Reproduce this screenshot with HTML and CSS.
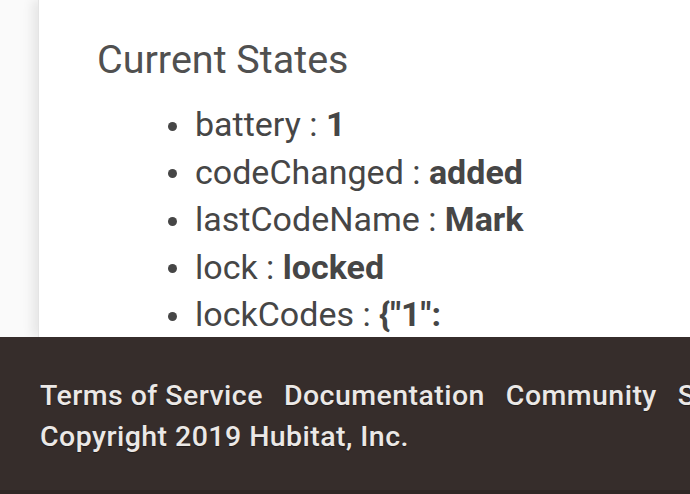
FILE: index.html
```html
<!DOCTYPE html>
<html>
<head>
<meta charset="utf-8">
<link rel="stylesheet" href="styles.css">
</head>
<body>
<div class="page">
  <main class="panel">
    <h2 class="title">Current States</h2>
    <ul class="states">
      <li>battery : <b>1</b></li>
      <li>codeChanged : <b>added</b></li>
      <li>lastCodeName : <b>Mark</b></li>
      <li>lock : <b>locked</b></li>
      <li>lockCodes : <b>{"1":</b></li>
    </ul>
  </main>
</div>
<footer class="footer">
  <nav class="links">
    <span>Terms of Service</span>
    <span>Documentation</span>
    <span>Community</span>
    <span>Support</span>
  </nav>
  <div class="copy">Copyright 2019 Hubitat, Inc.</div>
</footer>
</body>
</html>
```

FILE: styles.css
```css
html, body {
  margin: 0;
  padding: 0;
  width: 690px;
  height: 494px;
  overflow: hidden;
  background: #fafafa;
  font-family: Roboto, "Liberation Sans", sans-serif;
}
.page {
  height: 337px;
  padding-left: 38px;
  overflow: hidden;
}
.panel {
  background: #fff;
  height: 337px;
  box-shadow: -6px 0 10px rgba(0,0,0,0.08);
  border-left: 1px solid #e4e4e4;
  padding: 37px 0 0 58px;
  box-sizing: border-box;
  width: 700px;
}
.title {
  margin: 0;
  font-weight: 400;
  font-size: 39.5px;
  line-height: 46px;
  color: #505050;
}
.states {
  margin: 18px 0 0;
  padding-left: 98px;
  list-style: none;
  font-size: 34px;
  line-height: 47.5px;
  color: #464646;
}
.states li::before {
  content: "";
  display: inline-block;
  width: 9px;
  height: 9px;
  border-radius: 50%;
  background: #464646;
  vertical-align: middle;
  margin: -2px 18px 0 -27px;
}
.states b {
  font-weight: 700;
}
.footer {
  background: #362d2b;
  height: 157px;
  box-sizing: border-box;
  padding: 39px 0 0 40px;
  color: #ebe8e6;
  font-size: 28.5px;
  font-weight: 500;
  letter-spacing: 0.45px;
  text-shadow: 0 1px 1px rgba(0,0,0,0.4);
  white-space: nowrap;
  overflow: hidden;
  border-bottom: 4px solid #2f2725;
}
.links {
  display: flex;
  gap: 21px;
  line-height: 40px;
}
.copy {
  line-height: 42px;
}
```
